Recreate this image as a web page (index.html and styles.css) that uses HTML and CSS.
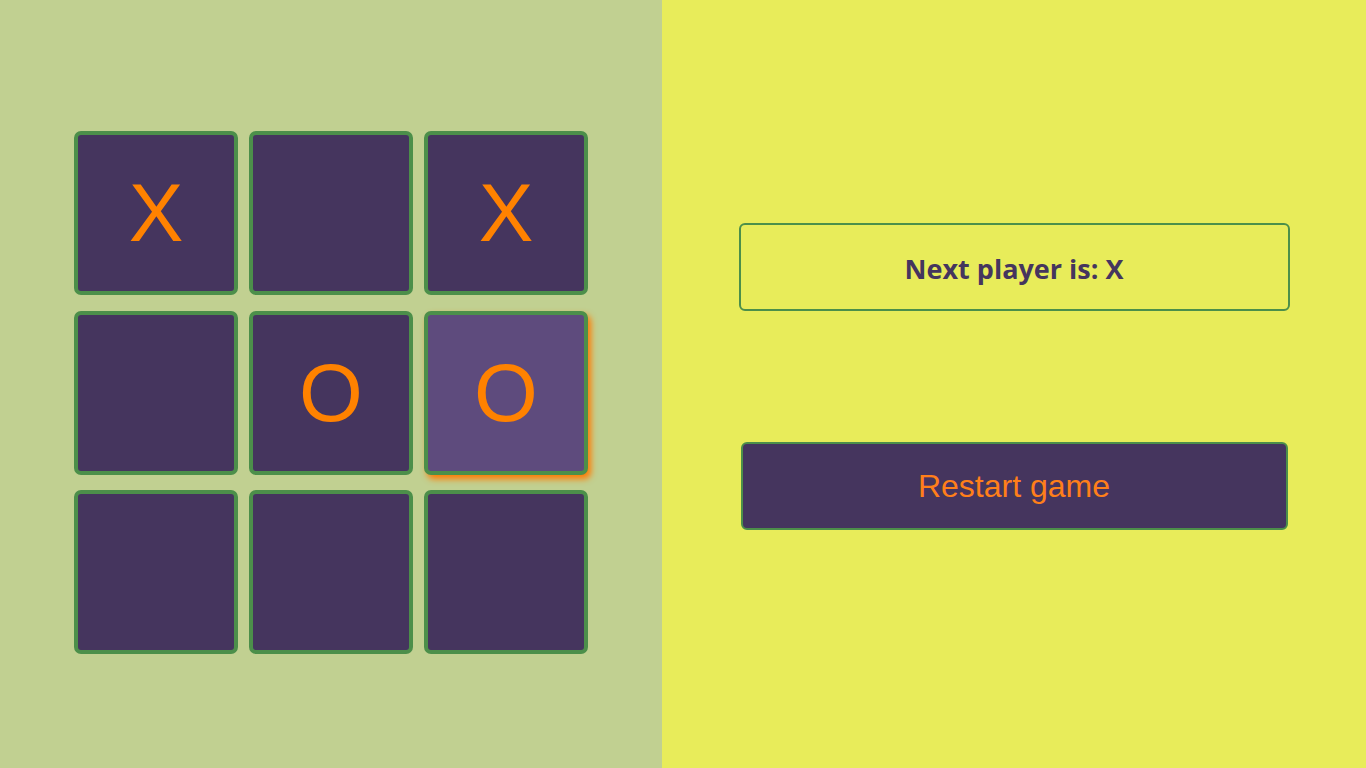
FILE: index.html
```html
<!DOCTYPE html>
<html>
<head>
<meta charset="utf-8">
<link rel="stylesheet" href="styles.css">
</head>
<body>
<div class="app">
  <div class="board-panel">
    <div class="board">
      <div class="cell">X</div>
      <div class="cell"></div>
      <div class="cell">X</div>
      <div class="cell"></div>
      <div class="cell">O</div>
      <div class="cell hover">O</div>
      <div class="cell"></div>
      <div class="cell"></div>
      <div class="cell"></div>
    </div>
  </div>
  <div class="info-panel">
    <div class="status">Next player is: X</div>
    <button class="restart">Restart game</button>
  </div>
</div>
</body>
</html>
```
FILE: styles.css
```css
html, body { margin: 0; padding: 0; }
body { width: 1366px; height: 768px; overflow: hidden; }
.app { display: flex; height: 768px; }
.board-panel {
  width: 662px;
  background: #c1d091;
  display: flex;
  justify-content: center;
  padding-top: 131px;
  box-sizing: border-box;
}
.board {
  display: grid;
  grid-template-columns: repeat(3, 164px);
  grid-template-rows: repeat(3, 164px);
  column-gap: 11px;
  row-gap: 15.5px;
  align-content: start;
}
.cell {
  box-sizing: border-box;
  background: #45355e;
  border: 4px solid #4c8f4a;
  border-radius: 7px;
  color: #ff8200;
  font-family: "Liberation Sans", Arial, sans-serif;
  font-size: 82px;
  display: flex;
  align-items: center;
  justify-content: center;
  line-height: 1;
}
.cell.hover {
  background: #5e4b7d;
  box-shadow: 3px 4px 6px #ff7a00;
}
.info-panel {
  flex: 1;
  background: #e8ec5a;
  display: flex;
  flex-direction: column;
  align-items: center;
  padding-top: 223px;
  box-sizing: border-box;
}
.status {
  box-sizing: border-box;
  width: 551px;
  height: 88px;
  border: 2px solid #4c8f4a;
  border-radius: 6px;
  display: flex;
  align-items: center;
  justify-content: center;
  font-family: "Open Sans", sans-serif;
  font-weight: 700;
  font-size: 27px;
  color: #45355e;
  padding-top: 2px;
}
.restart {
  margin-top: 131px;
  box-sizing: border-box;
  width: 547px;
  height: 88px;
  border: 2px solid #4c8f4a;
  border-radius: 6px;
  background: #45355e;
  color: #ff7f1a;
  font-family: "Liberation Sans", Arial, sans-serif;
  font-size: 32px;
  padding: 0;
}
```
